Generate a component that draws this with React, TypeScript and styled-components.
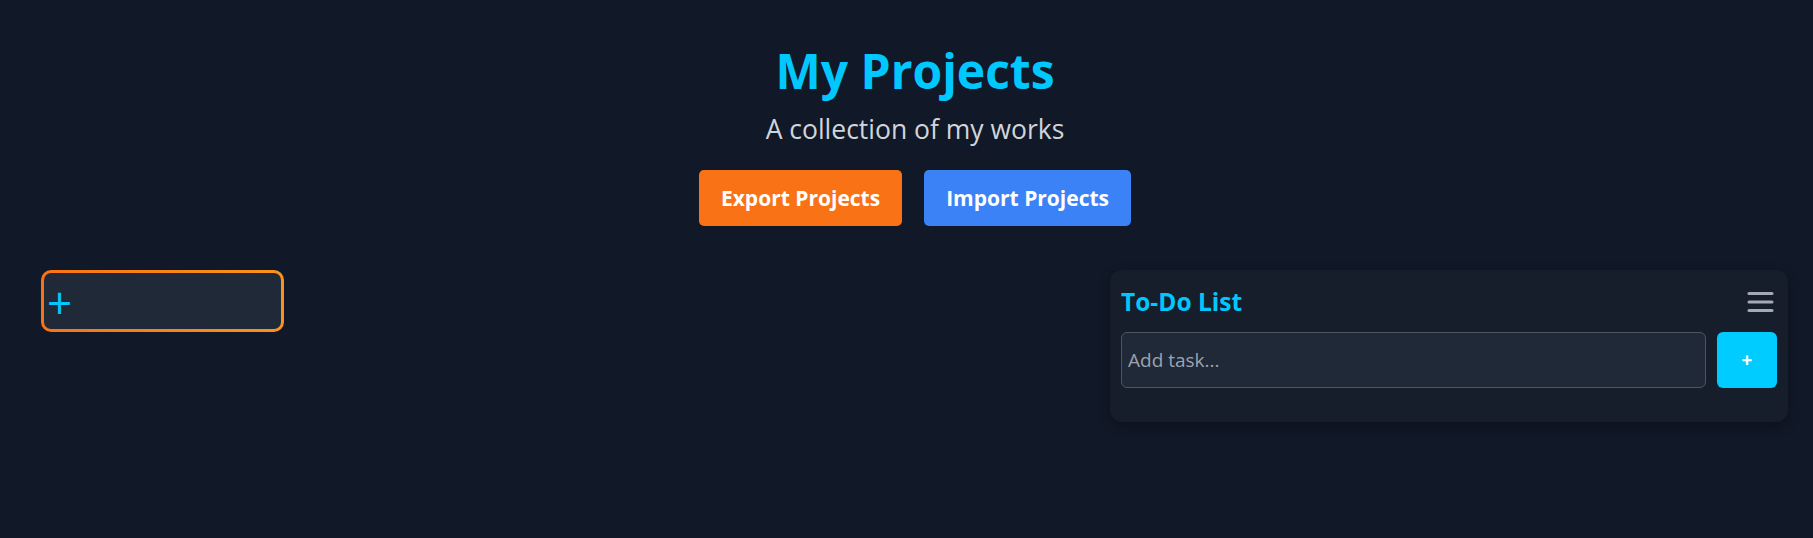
import styled, { createGlobalStyle } from "styled-components";

const GlobalStyle = createGlobalStyle`
  body {
    margin: 0;
    background: #111827;
    font-family: "Open Sans", "Noto Sans", sans-serif;
  }
`;

const Page = styled.div`
  min-height: 538px;
  background: #111827;
`;

const Header = styled.header`
  display: flex;
  flex-direction: column;
  align-items: center;
  padding: 42px 0 0 17px;
`;

const Title = styled.h1`
  margin: 0;
  font-size: 48px;
  line-height: 1.2;
  font-weight: 700;
  color: #00c8ff;
`;

const Subtitle = styled.p`
  margin: 14px 0 0;
  font-size: 26.5px;
  line-height: 1.2;
  color: #d1d5db;
`;

const ButtonRow = styled.div`
  display: flex;
  gap: 22px;
  margin-top: 25px;
`;

const ActionButton = styled.button<{ $color: string }>`
  height: 56px;
  padding: 0 22px;
  border: none;
  border-radius: 5px;
  background: ${(p) => p.$color};
  color: #ffffff;
  font-family: inherit;
  font-size: 21px;
  font-weight: 700;
  cursor: pointer;
`;

const Main = styled.main`
  display: flex;
  align-items: flex-start;
  margin-top: 44px;
  padding: 0 25px 0 41px;
`;

const ProjectGrid = styled.section`
  flex: 1;
  display: flex;
  flex-wrap: wrap;
  gap: 16px;
`;

const AddCard = styled.button`
  width: 243px;
  height: 62px;
  box-sizing: border-box;
  display: flex;
  align-items: center;
  padding: 2px 0 0 3px;
  border: 3px solid transparent;
  border-radius: 10px;
  background: linear-gradient(#1f2937, #1f2937) padding-box,
    linear-gradient(90deg, #f97316, #f7931e) border-box;
  color: #00c8ff;
  font-family: inherit;
  font-size: 44px;
  line-height: 1;
  cursor: pointer;
`;

const TodoPanel = styled.aside`
  width: 678px;
  box-sizing: border-box;
  padding: 17px 11px 34px;
  border-radius: 12px;
  background: #161d2b;
  box-shadow: 0 4px 12px rgba(0, 0, 0, 0.3);
`;

const TodoHead = styled.div`
  display: flex;
  justify-content: space-between;
  align-items: center;
`;

const TodoTitle = styled.h2`
  margin: 0;
  font-size: 24.5px;
  line-height: 1.2;
  font-weight: 700;
  color: #00c8ff;
`;

const MenuButton = styled.button`
  display: flex;
  padding: 0 3px 0 0;
  border: none;
  background: none;
  cursor: pointer;
`;

const InputRow = styled.div`
  display: flex;
  gap: 11px;
  margin-top: 15px;
`;

const TaskInput = styled.input`
  flex: 1;
  height: 56px;
  box-sizing: border-box;
  padding: 0 6px;
  border: 1px solid #4b5563;
  border-radius: 6px;
  background: #1f2937;
  color: #e5e7eb;
  font-family: inherit;
  font-size: 19px;

  &::placeholder {
    color: #9ca3af;
  }
`;

const AddTaskButton = styled.button`
  width: 60px;
  height: 56px;
  border: none;
  border-radius: 6px;
  background: #00ccff;
  color: #ffffff;
  font-family: inherit;
  font-size: 19px;
  font-weight: 700;
  cursor: pointer;
`;

const MenuIcon = () => (
  <svg width="27" height="22" viewBox="0 0 27 22">
    <g stroke="#a3aab6" strokeWidth="3" strokeLinecap="round">
      <line x1="2" y1="2.5" x2="25" y2="2.5" />
      <line x1="2" y1="11" x2="25" y2="11" />
      <line x1="2" y1="19.5" x2="25" y2="19.5" />
    </g>
  </svg>
);

export default function App() {
  return (
    <Page>
      <GlobalStyle />
      <Header>
        <Title>My Projects</Title>
        <Subtitle>A collection of my works</Subtitle>
        <ButtonRow>
          <ActionButton $color="#f97316">Export Projects</ActionButton>
          <ActionButton $color="#3b82f6">Import Projects</ActionButton>
        </ButtonRow>
      </Header>
      <Main>
        <ProjectGrid>
          <AddCard>+</AddCard>
        </ProjectGrid>
        <TodoPanel>
          <TodoHead>
            <TodoTitle>To-Do List</TodoTitle>
            <MenuButton>
              <MenuIcon />
            </MenuButton>
          </TodoHead>
          <InputRow>
            <TaskInput placeholder="Add task..." />
            <AddTaskButton>+</AddTaskButton>
          </InputRow>
        </TodoPanel>
      </Main>
    </Page>
  );
}
